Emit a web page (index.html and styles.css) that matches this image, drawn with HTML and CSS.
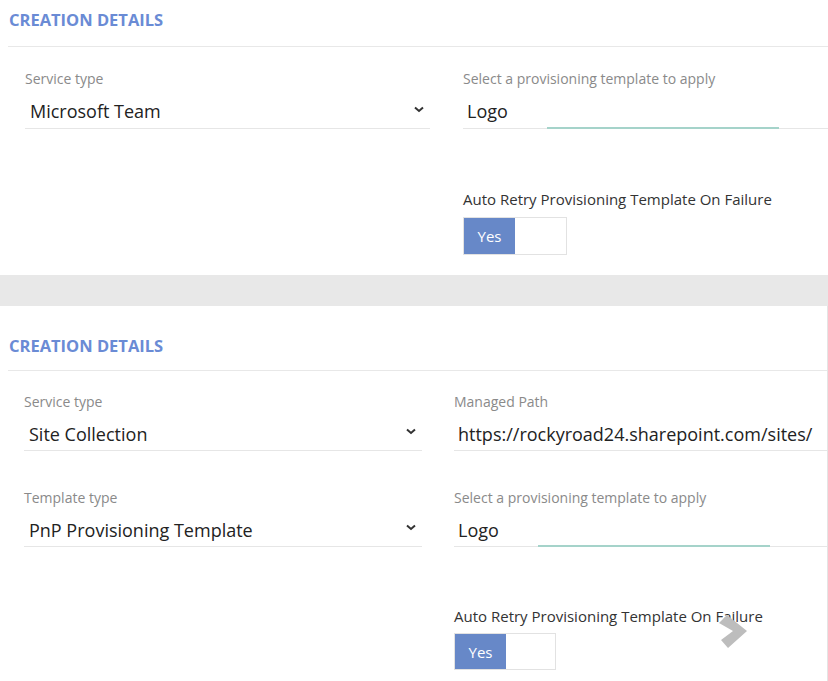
FILE: index.html
```html
<!DOCTYPE html>
<html lang="en">
<head>
  <meta charset="UTF-8">
  <meta name="viewport" content="width=device-width, initial-scale=1.0">
  <title>Creation Details</title>
  <link rel="stylesheet" href="styles.css">
</head>
<body>
  <!-- Microsoft Team request -->
  <section class="panel panel-top">
    <h2 class="panel-title">CREATION DETAILS</h2>
    <div class="divider"></div>
    <div class="fields">
      <div class="col">
        <div class="field">
          <label class="field-label">Service type</label>
          <div class="select">
            <span>Microsoft Team</span>
            <svg class="caret" width="10" height="7" viewBox="0 0 10 7"><polyline points="1,1.5 5,5 9,1.5" fill="none" stroke="#333" stroke-width="2"/></svg>
          </div>
        </div>
      </div>
      <div class="col">
        <div class="field">
          <label class="field-label">Select a provisioning template to apply</label>
          <div class="input">
            <span>Logo</span>
            <span class="loading-bar"></span>
          </div>
        </div>
        <div class="retry">
          <div class="retry-label">Auto Retry Provisioning Template On Failure</div>
          <div class="toggle">
            <span class="toggle-on">Yes</span>
            <span class="toggle-off"></span>
          </div>
        </div>
      </div>
    </div>
  </section>

  <div class="band"></div>

  <!-- Site Collection request -->
  <section class="panel panel-bottom">
    <h2 class="panel-title">CREATION DETAILS</h2>
    <div class="divider"></div>
    <div class="fields">
      <div class="col">
        <div class="field">
          <label class="field-label">Service type</label>
          <div class="select">
            <span>Site Collection</span>
            <svg class="caret" width="10" height="7" viewBox="0 0 10 7"><polyline points="1,1.5 5,5 9,1.5" fill="none" stroke="#333" stroke-width="2"/></svg>
          </div>
        </div>
        <div class="field">
          <label class="field-label">Template type</label>
          <div class="select">
            <span>PnP Provisioning Template</span>
            <svg class="caret" width="10" height="7" viewBox="0 0 10 7"><polyline points="1,1.5 5,5 9,1.5" fill="none" stroke="#333" stroke-width="2"/></svg>
          </div>
        </div>
      </div>
      <div class="col">
        <div class="field">
          <label class="field-label">Managed Path</label>
          <div class="input">
            <span>https://rockyroad24.sharepoint.com/sites/</span>
          </div>
        </div>
        <div class="field">
          <label class="field-label">Select a provisioning template to apply</label>
          <div class="input">
            <span>Logo</span>
            <span class="loading-bar"></span>
          </div>
        </div>
        <div class="retry">
          <div class="retry-label">Auto Retry Provisioning Template On Failure</div>
          <div class="toggle">
            <span class="toggle-on">Yes</span>
            <span class="toggle-off"></span>
          </div>
        </div>
      </div>
    </div>

    <!-- carousel next arrow -->
    <svg class="next-arrow" width="36" height="38" viewBox="0 0 36 38">
      <polygon points="3,10 11,2 31,18 12,35 5,27 17,18" fill="#bdbdbd"/>
    </svg>
  </section>
</body>
</html>
```

FILE: styles.css
```css
body {
  margin: 0;
  background-color: #fff;
  font-family: "Open Sans", "Noto Sans", sans-serif;
  color: #222;
  overflow: hidden;
}

.panel {
  position: relative;
  padding-left: 8px;
  background-color: #fff;
}

.panel-top {
  padding-top: 9px;
  padding-bottom: 20px;
}

.panel-bottom {
  padding-top: 29px;
  padding-bottom: 20px;
  border-right: 1px solid #e4e4e4;
}

.panel-title {
  margin: 0;
  padding-left: 1px;
  font-size: 16.5px;
  line-height: 22px;
  font-weight: 700;
  color: #6a8bd5;
}

.panel-top .panel-title {
  margin-bottom: 15px;
}

.panel-bottom .panel-title {
  margin-bottom: 13px;
}

.divider {
  border-top: 1px solid #e8e8e8;
}

.fields {
  display: grid;
}

.panel-top .fields {
  grid-template-columns: 405px 1fr;
  column-gap: 33px;
  padding: 22px 0 0 17px;
}

.panel-bottom .fields {
  grid-template-columns: 398px 1fr;
  column-gap: 32px;
  padding: 21px 0 0 16px;
}

.field {
  margin-bottom: 37px;
}

.field-label {
  display: block;
  font-size: 14px;
  line-height: 20px;
  color: #8a8a8a;
}

.select,
.input {
  position: relative;
  display: flex;
  align-items: center;
  height: 38px;
  margin-top: 2px;
  padding-top: 3px;
  box-sizing: border-box;
  border-bottom: 1px solid #e6e6e6;
  font-size: 18px;
  color: #222;
}

.panel-bottom .select,
.panel-bottom .input {
  height: 37px;
}

.select {
  justify-content: space-between;
  padding-left: 5px;
  padding-right: 6px;
}

.input {
  padding-left: 4px;
}

.caret {
  margin-top: -4px;
}

.loading-bar {
  position: absolute;
  left: 84px;
  bottom: -1px;
  width: 232px;
  height: 2px;
  background-color: #a5d3ca;
}

.retry {
  margin-top: 60px;
}

.panel-bottom .retry {
  margin-top: 59px;
}

.retry-label {
  font-size: 15px;
  line-height: 20px;
  color: #333;
}

.toggle {
  display: flex;
  width: 102px;
  height: 36px;
  margin-top: 8px;
  border: 1px solid #e2e2e2;
}

.panel-bottom .toggle {
  width: 100px;
  height: 35px;
  margin-top: 7px;
}

.toggle-on {
  display: flex;
  align-items: center;
  justify-content: center;
  width: 51px;
  background-color: #6788c8;
  color: #fff;
  font-size: 15px;
}

.toggle-off {
  flex: 1;
  background-color: #fff;
}

.band {
  height: 31px;
  background-color: #e8e8e8;
}

.next-arrow {
  position: absolute;
  left: 716px;
  top: 307px;
}
```
